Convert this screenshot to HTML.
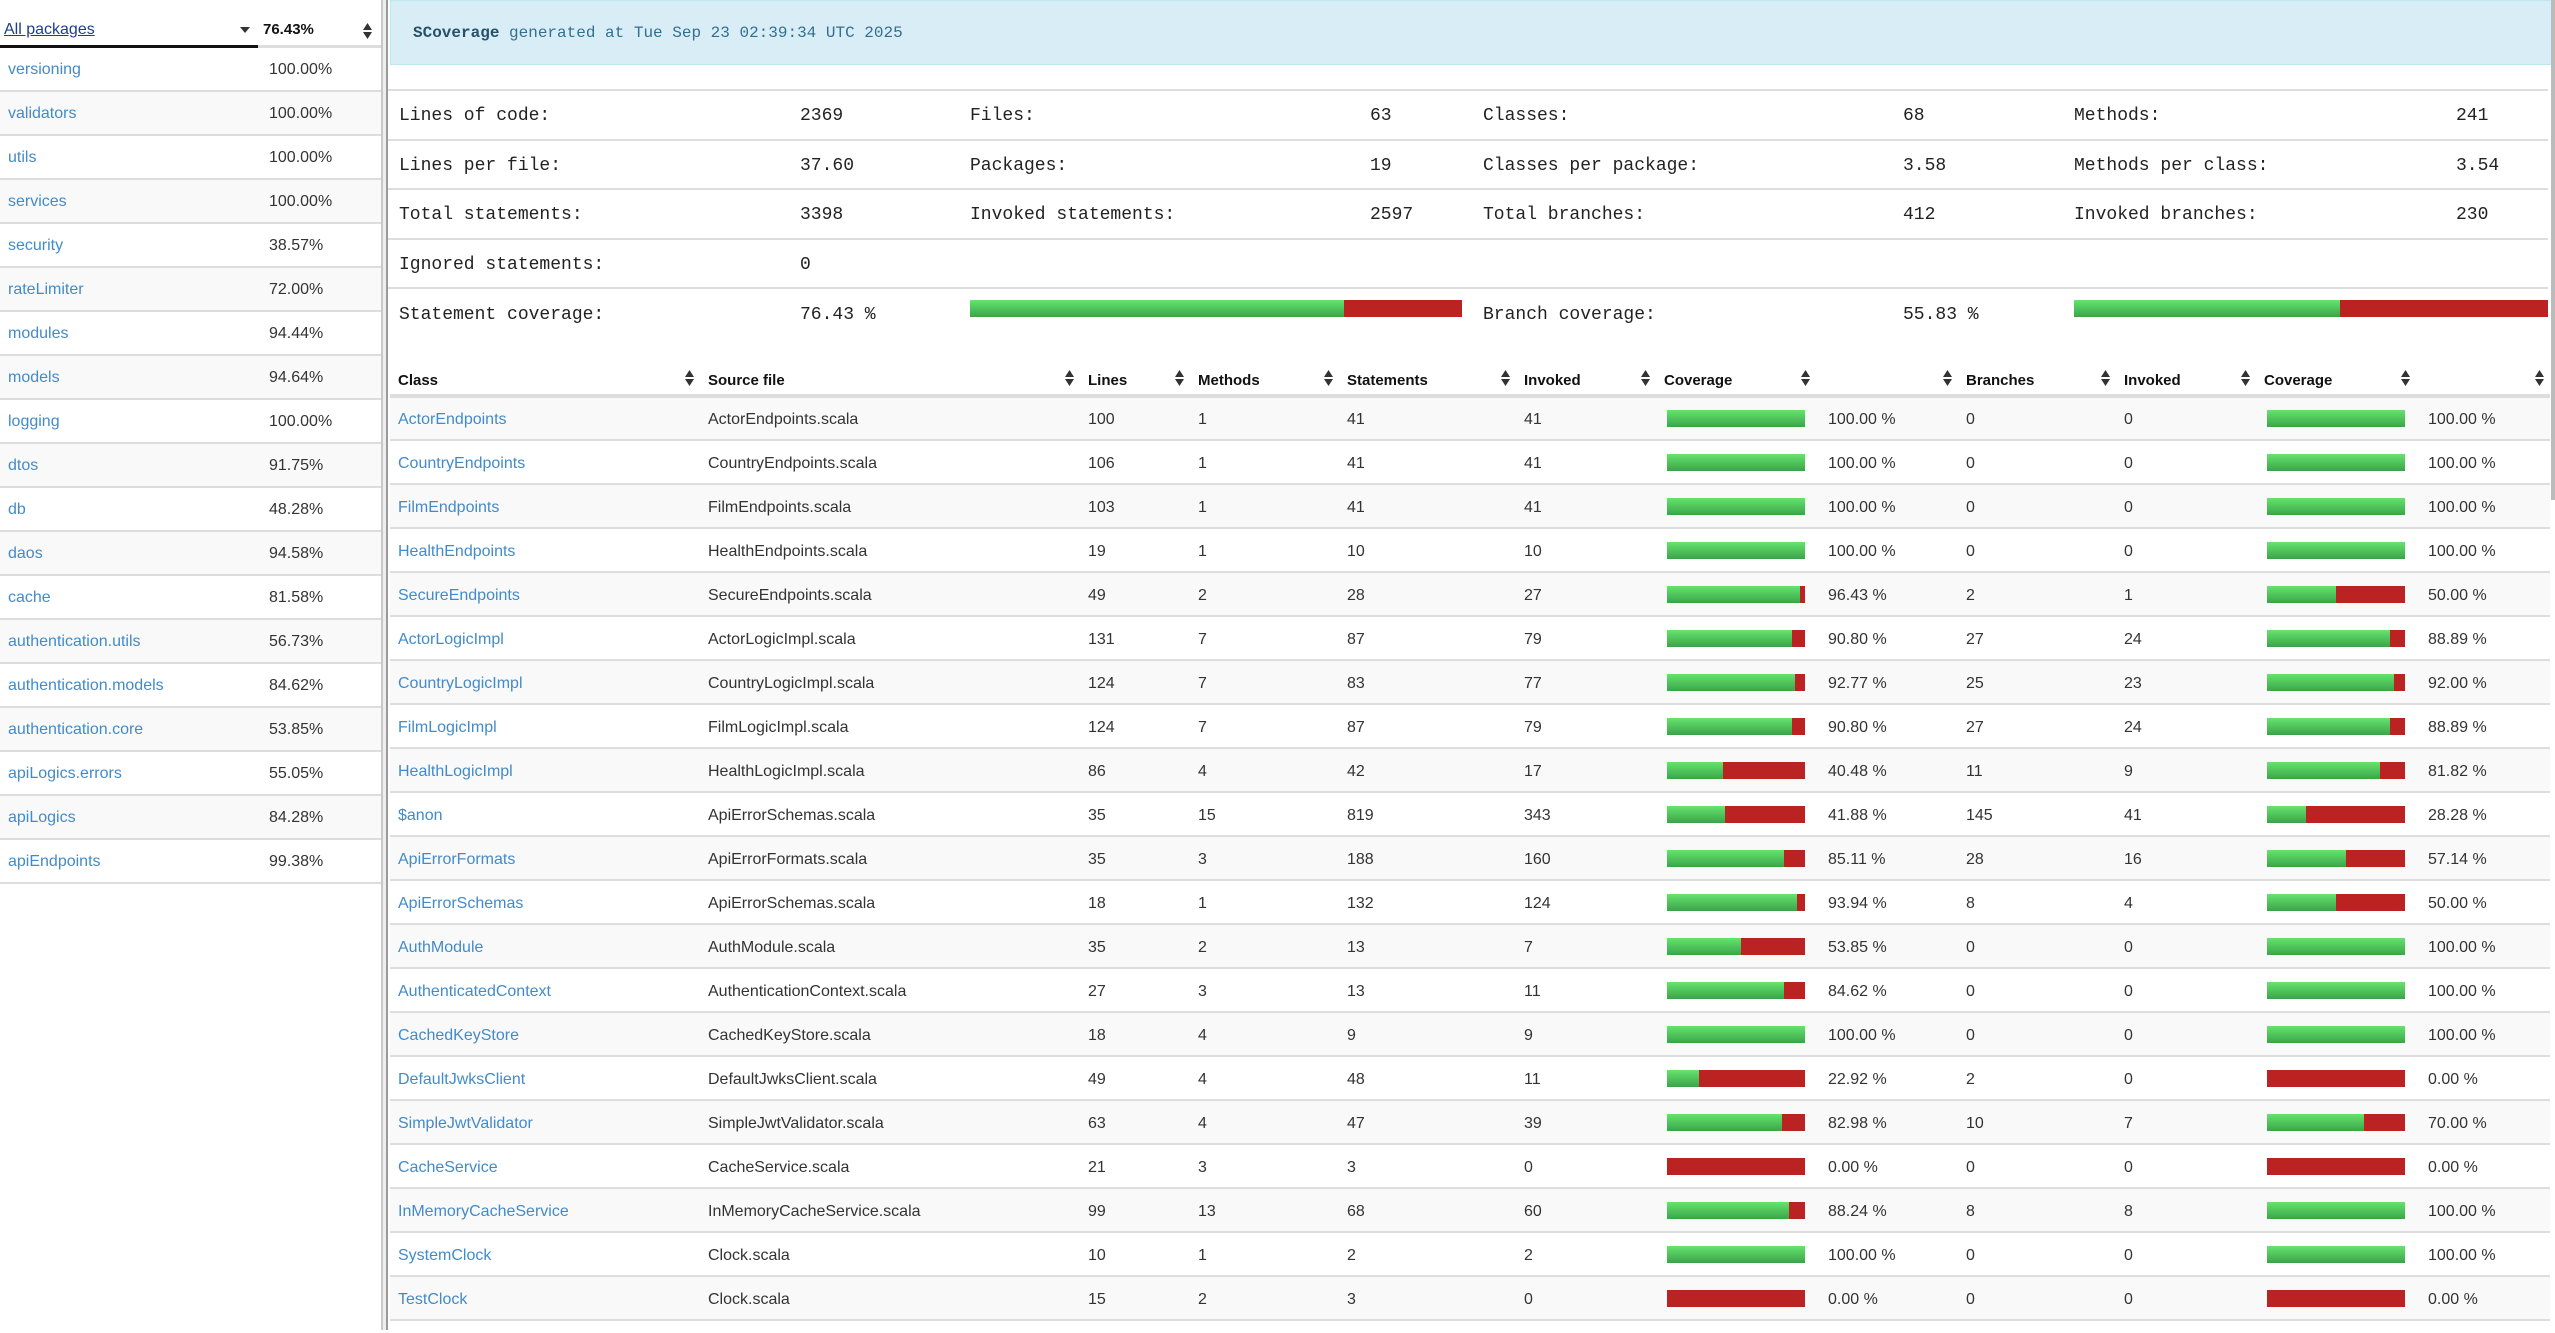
<!DOCTYPE html>
<html><head><meta charset="utf-8">
<style>
*{box-sizing:border-box;margin:0;padding:0}
body{width:2555px;height:1330px;overflow:hidden;background:#fff;font-family:"Liberation Sans",Arial,sans-serif;font-size:16px;color:#333;position:relative}
a{color:#428bca;text-decoration:none}
#side{position:absolute;left:0;top:3px;width:381px;height:1330px;background:#fff}
#div{position:absolute;left:381px;top:0;width:7px;height:1330px;border-left:2px solid #c8c8c8;border-right:2px solid #9a9a9a;background:#eee}
.sh{position:relative;height:45px;border-bottom:3px solid #ddd}
.sh .bl{position:absolute;left:0;bottom:-3px;width:258px;height:3px;background:#111}
.sh .ap{position:absolute;left:4px;top:18px;font-size:16px;color:#1a3f8f;text-decoration:underline}
.sh .pc{position:absolute;left:263px;top:18px;font-weight:bold;font-size:15px;color:#111}
.srow{height:44px;border-bottom:2px solid #ddd;position:relative}
.srow:nth-child(even){background:#f9f9f9}
.srow a{position:absolute;left:8px;top:13px;font-size:16px}
.srow span{position:absolute;left:269px;top:13px;font-size:16px}
#main{position:absolute;left:388px;top:0;width:2167px;height:1330px}
.hdr{position:absolute;left:2px;top:0;width:2163px;height:65px;background:#d9edf7;border:1px solid #bce8f1;font-family:"Liberation Mono",monospace;font-size:16px;color:#31708f;padding:23px 0 0 22px}
.hdr b{color:#245269}
.st{position:absolute;left:0;top:89px;width:2160px;font-family:"Liberation Mono",monospace;font-size:18px;color:#222}
.st .r{height:49.5px;border-top:2px solid #ddd;position:relative}
.st .r span{position:absolute;top:15px}
.bar{display:flex;height:17px}
.g{background:linear-gradient(#66e36f,#3aa548);height:100%}
.rd{background:#bb2222;height:100%;flex:1}
table{position:absolute;left:2px;top:362px;border-collapse:collapse;table-layout:fixed;width:2160px}
th{height:34px;text-align:left;font-size:15px;color:#111;border-bottom:4px solid #ddd;position:relative;padding-left:8px;vertical-align:bottom;padding-bottom:5px}
th svg{position:absolute;right:6px;bottom:8px}
td{height:44px;border-bottom:2px solid #ddd;padding-left:8px;font-size:16px;vertical-align:middle;white-space:nowrap;padding-top:3px}
td.p{padding-left:12px}
tbody tr:nth-child(odd){background:#f9f9f9}
td.b{padding-left:11px;padding-top:0}
td.b .bar{width:138px}
#scroll{position:absolute;right:0;top:0;width:4px;height:500px;background:#bbb}
</style></head><body>
<div id="side">
<div class="sh"><div class="bl"></div><a class="ap">All packages</a>
<svg style="position:absolute;left:240px;top:24px" width="10" height="6"><path d="M0 0H10L5 6Z" fill="#333"/></svg>
<span class="pc">76.43%</span>
<svg style="position:absolute;left:363px;top:20px" width="9" height="16"><path d="M0 7H9L4.5 0Z M0 9H9L4.5 16Z" fill="#333"/></svg>
</div>
<div>
<div class="srow"><a>versioning</a><span>100.00%</span></div>
<div class="srow"><a>validators</a><span>100.00%</span></div>
<div class="srow"><a>utils</a><span>100.00%</span></div>
<div class="srow"><a>services</a><span>100.00%</span></div>
<div class="srow"><a>security</a><span>38.57%</span></div>
<div class="srow"><a>rateLimiter</a><span>72.00%</span></div>
<div class="srow"><a>modules</a><span>94.44%</span></div>
<div class="srow"><a>models</a><span>94.64%</span></div>
<div class="srow"><a>logging</a><span>100.00%</span></div>
<div class="srow"><a>dtos</a><span>91.75%</span></div>
<div class="srow"><a>db</a><span>48.28%</span></div>
<div class="srow"><a>daos</a><span>94.58%</span></div>
<div class="srow"><a>cache</a><span>81.58%</span></div>
<div class="srow"><a>authentication.utils</a><span>56.73%</span></div>
<div class="srow"><a>authentication.models</a><span>84.62%</span></div>
<div class="srow"><a>authentication.core</a><span>53.85%</span></div>
<div class="srow"><a>apiLogics.errors</a><span>55.05%</span></div>
<div class="srow"><a>apiLogics</a><span>84.28%</span></div>
<div class="srow"><a>apiEndpoints</a><span>99.38%</span></div>
</div>
</div>
<div id="div"></div>
<div id="main">
<div class="hdr"><b>SCoverage</b> generated at Tue Sep 23 02:39:34 UTC 2025</div>
<div class="st">
<div class="r"><span style="left:11px">Lines of code:</span><span style="left:412px">2369</span><span style="left:582px">Files:</span><span style="left:982px">63</span><span style="left:1095px">Classes:</span><span style="left:1515px">68</span><span style="left:1686px">Methods:</span><span style="left:2068px">241</span></div>
<div class="r"><span style="left:11px">Lines per file:</span><span style="left:412px">37.60</span><span style="left:582px">Packages:</span><span style="left:982px">19</span><span style="left:1095px">Classes per package:</span><span style="left:1515px">3.58</span><span style="left:1686px">Methods per class:</span><span style="left:2068px">3.54</span></div>
<div class="r"><span style="left:11px">Total statements:</span><span style="left:412px">3398</span><span style="left:582px">Invoked statements:</span><span style="left:982px">2597</span><span style="left:1095px">Total branches:</span><span style="left:1515px">412</span><span style="left:1686px">Invoked branches:</span><span style="left:2068px">230</span></div>
<div class="r"><span style="left:11px">Ignored statements:</span><span style="left:412px">0</span></div>
<div class="r" style="height:50px"><span style="left:11px;top:16px">Statement coverage:</span><span style="left:412px;top:16px">76.43 %</span><span style="left:582px;top:11px"><div class="bar" style="width:492px"><div class="g" style="width:374px"></div><div class="rd"></div></div></span><span style="left:1095px;top:16px">Branch coverage:</span><span style="left:1515px;top:16px">55.83 %</span><span style="left:1686px;top:11px"><div class="bar" style="width:474px"><div class="g" style="width:266px"></div><div class="rd"></div></div></span></div>
</div>
<table>
<colgroup><col style="width:310px"><col style="width:380px"><col style="width:110px"><col style="width:149px"><col style="width:177px"><col style="width:140px"><col style="width:160px"><col style="width:142px"><col style="width:158px"><col style="width:140px"><col style="width:160px"><col style="width:134px"></colgroup>
<thead><tr>
<th>Class<svg width="9" height="16"><path d="M0 7H9L4.5 0Z M0 9H9L4.5 16Z" fill="#333"/></svg></th>
<th>Source file<svg width="9" height="16"><path d="M0 7H9L4.5 0Z M0 9H9L4.5 16Z" fill="#333"/></svg></th>
<th>Lines<svg width="9" height="16"><path d="M0 7H9L4.5 0Z M0 9H9L4.5 16Z" fill="#333"/></svg></th>
<th>Methods<svg width="9" height="16"><path d="M0 7H9L4.5 0Z M0 9H9L4.5 16Z" fill="#333"/></svg></th>
<th>Statements<svg width="9" height="16"><path d="M0 7H9L4.5 0Z M0 9H9L4.5 16Z" fill="#333"/></svg></th>
<th>Invoked<svg width="9" height="16"><path d="M0 7H9L4.5 0Z M0 9H9L4.5 16Z" fill="#333"/></svg></th>
<th>Coverage<svg width="9" height="16"><path d="M0 7H9L4.5 0Z M0 9H9L4.5 16Z" fill="#333"/></svg></th>
<th><svg width="9" height="16"><path d="M0 7H9L4.5 0Z M0 9H9L4.5 16Z" fill="#333"/></svg></th>
<th>Branches<svg width="9" height="16"><path d="M0 7H9L4.5 0Z M0 9H9L4.5 16Z" fill="#333"/></svg></th>
<th>Invoked<svg width="9" height="16"><path d="M0 7H9L4.5 0Z M0 9H9L4.5 16Z" fill="#333"/></svg></th>
<th>Coverage<svg width="9" height="16"><path d="M0 7H9L4.5 0Z M0 9H9L4.5 16Z" fill="#333"/></svg></th>
<th><svg width="9" height="16"><path d="M0 7H9L4.5 0Z M0 9H9L4.5 16Z" fill="#333"/></svg></th>
</tr></thead>
<tbody>
<tr><td><a>ActorEndpoints</a></td><td>ActorEndpoints.scala</td><td>100</td><td>1</td><td>41</td><td>41</td><td class="b"><div class="bar"><div class="g" style="width:138px"></div><div class="rd"></div></div></td><td class="p">100.00 %</td><td>0</td><td>0</td><td class="b"><div class="bar"><div class="g" style="width:138px"></div><div class="rd"></div></div></td><td class="p">100.00 %</td></tr>
<tr><td><a>CountryEndpoints</a></td><td>CountryEndpoints.scala</td><td>106</td><td>1</td><td>41</td><td>41</td><td class="b"><div class="bar"><div class="g" style="width:138px"></div><div class="rd"></div></div></td><td class="p">100.00 %</td><td>0</td><td>0</td><td class="b"><div class="bar"><div class="g" style="width:138px"></div><div class="rd"></div></div></td><td class="p">100.00 %</td></tr>
<tr><td><a>FilmEndpoints</a></td><td>FilmEndpoints.scala</td><td>103</td><td>1</td><td>41</td><td>41</td><td class="b"><div class="bar"><div class="g" style="width:138px"></div><div class="rd"></div></div></td><td class="p">100.00 %</td><td>0</td><td>0</td><td class="b"><div class="bar"><div class="g" style="width:138px"></div><div class="rd"></div></div></td><td class="p">100.00 %</td></tr>
<tr><td><a>HealthEndpoints</a></td><td>HealthEndpoints.scala</td><td>19</td><td>1</td><td>10</td><td>10</td><td class="b"><div class="bar"><div class="g" style="width:138px"></div><div class="rd"></div></div></td><td class="p">100.00 %</td><td>0</td><td>0</td><td class="b"><div class="bar"><div class="g" style="width:138px"></div><div class="rd"></div></div></td><td class="p">100.00 %</td></tr>
<tr><td><a>SecureEndpoints</a></td><td>SecureEndpoints.scala</td><td>49</td><td>2</td><td>28</td><td>27</td><td class="b"><div class="bar"><div class="g" style="width:133px"></div><div class="rd"></div></div></td><td class="p">96.43 %</td><td>2</td><td>1</td><td class="b"><div class="bar"><div class="g" style="width:69px"></div><div class="rd"></div></div></td><td class="p">50.00 %</td></tr>
<tr><td><a>ActorLogicImpl</a></td><td>ActorLogicImpl.scala</td><td>131</td><td>7</td><td>87</td><td>79</td><td class="b"><div class="bar"><div class="g" style="width:125px"></div><div class="rd"></div></div></td><td class="p">90.80 %</td><td>27</td><td>24</td><td class="b"><div class="bar"><div class="g" style="width:123px"></div><div class="rd"></div></div></td><td class="p">88.89 %</td></tr>
<tr><td><a>CountryLogicImpl</a></td><td>CountryLogicImpl.scala</td><td>124</td><td>7</td><td>83</td><td>77</td><td class="b"><div class="bar"><div class="g" style="width:128px"></div><div class="rd"></div></div></td><td class="p">92.77 %</td><td>25</td><td>23</td><td class="b"><div class="bar"><div class="g" style="width:127px"></div><div class="rd"></div></div></td><td class="p">92.00 %</td></tr>
<tr><td><a>FilmLogicImpl</a></td><td>FilmLogicImpl.scala</td><td>124</td><td>7</td><td>87</td><td>79</td><td class="b"><div class="bar"><div class="g" style="width:125px"></div><div class="rd"></div></div></td><td class="p">90.80 %</td><td>27</td><td>24</td><td class="b"><div class="bar"><div class="g" style="width:123px"></div><div class="rd"></div></div></td><td class="p">88.89 %</td></tr>
<tr><td><a>HealthLogicImpl</a></td><td>HealthLogicImpl.scala</td><td>86</td><td>4</td><td>42</td><td>17</td><td class="b"><div class="bar"><div class="g" style="width:56px"></div><div class="rd"></div></div></td><td class="p">40.48 %</td><td>11</td><td>9</td><td class="b"><div class="bar"><div class="g" style="width:113px"></div><div class="rd"></div></div></td><td class="p">81.82 %</td></tr>
<tr><td><a>$anon</a></td><td>ApiErrorSchemas.scala</td><td>35</td><td>15</td><td>819</td><td>343</td><td class="b"><div class="bar"><div class="g" style="width:58px"></div><div class="rd"></div></div></td><td class="p">41.88 %</td><td>145</td><td>41</td><td class="b"><div class="bar"><div class="g" style="width:39px"></div><div class="rd"></div></div></td><td class="p">28.28 %</td></tr>
<tr><td><a>ApiErrorFormats</a></td><td>ApiErrorFormats.scala</td><td>35</td><td>3</td><td>188</td><td>160</td><td class="b"><div class="bar"><div class="g" style="width:117px"></div><div class="rd"></div></div></td><td class="p">85.11 %</td><td>28</td><td>16</td><td class="b"><div class="bar"><div class="g" style="width:79px"></div><div class="rd"></div></div></td><td class="p">57.14 %</td></tr>
<tr><td><a>ApiErrorSchemas</a></td><td>ApiErrorSchemas.scala</td><td>18</td><td>1</td><td>132</td><td>124</td><td class="b"><div class="bar"><div class="g" style="width:130px"></div><div class="rd"></div></div></td><td class="p">93.94 %</td><td>8</td><td>4</td><td class="b"><div class="bar"><div class="g" style="width:69px"></div><div class="rd"></div></div></td><td class="p">50.00 %</td></tr>
<tr><td><a>AuthModule</a></td><td>AuthModule.scala</td><td>35</td><td>2</td><td>13</td><td>7</td><td class="b"><div class="bar"><div class="g" style="width:74px"></div><div class="rd"></div></div></td><td class="p">53.85 %</td><td>0</td><td>0</td><td class="b"><div class="bar"><div class="g" style="width:138px"></div><div class="rd"></div></div></td><td class="p">100.00 %</td></tr>
<tr><td><a>AuthenticatedContext</a></td><td>AuthenticationContext.scala</td><td>27</td><td>3</td><td>13</td><td>11</td><td class="b"><div class="bar"><div class="g" style="width:117px"></div><div class="rd"></div></div></td><td class="p">84.62 %</td><td>0</td><td>0</td><td class="b"><div class="bar"><div class="g" style="width:138px"></div><div class="rd"></div></div></td><td class="p">100.00 %</td></tr>
<tr><td><a>CachedKeyStore</a></td><td>CachedKeyStore.scala</td><td>18</td><td>4</td><td>9</td><td>9</td><td class="b"><div class="bar"><div class="g" style="width:138px"></div><div class="rd"></div></div></td><td class="p">100.00 %</td><td>0</td><td>0</td><td class="b"><div class="bar"><div class="g" style="width:138px"></div><div class="rd"></div></div></td><td class="p">100.00 %</td></tr>
<tr><td><a>DefaultJwksClient</a></td><td>DefaultJwksClient.scala</td><td>49</td><td>4</td><td>48</td><td>11</td><td class="b"><div class="bar"><div class="g" style="width:32px"></div><div class="rd"></div></div></td><td class="p">22.92 %</td><td>2</td><td>0</td><td class="b"><div class="bar"><div class="rd"></div></div></td><td class="p">0.00 %</td></tr>
<tr><td><a>SimpleJwtValidator</a></td><td>SimpleJwtValidator.scala</td><td>63</td><td>4</td><td>47</td><td>39</td><td class="b"><div class="bar"><div class="g" style="width:115px"></div><div class="rd"></div></div></td><td class="p">82.98 %</td><td>10</td><td>7</td><td class="b"><div class="bar"><div class="g" style="width:97px"></div><div class="rd"></div></div></td><td class="p">70.00 %</td></tr>
<tr><td><a>CacheService</a></td><td>CacheService.scala</td><td>21</td><td>3</td><td>3</td><td>0</td><td class="b"><div class="bar"><div class="rd"></div></div></td><td class="p">0.00 %</td><td>0</td><td>0</td><td class="b"><div class="bar"><div class="rd"></div></div></td><td class="p">0.00 %</td></tr>
<tr><td><a>InMemoryCacheService</a></td><td>InMemoryCacheService.scala</td><td>99</td><td>13</td><td>68</td><td>60</td><td class="b"><div class="bar"><div class="g" style="width:122px"></div><div class="rd"></div></div></td><td class="p">88.24 %</td><td>8</td><td>8</td><td class="b"><div class="bar"><div class="g" style="width:138px"></div><div class="rd"></div></div></td><td class="p">100.00 %</td></tr>
<tr><td><a>SystemClock</a></td><td>Clock.scala</td><td>10</td><td>1</td><td>2</td><td>2</td><td class="b"><div class="bar"><div class="g" style="width:138px"></div><div class="rd"></div></div></td><td class="p">100.00 %</td><td>0</td><td>0</td><td class="b"><div class="bar"><div class="g" style="width:138px"></div><div class="rd"></div></div></td><td class="p">100.00 %</td></tr>
<tr><td><a>TestClock</a></td><td>Clock.scala</td><td>15</td><td>2</td><td>3</td><td>0</td><td class="b"><div class="bar"><div class="rd"></div></div></td><td class="p">0.00 %</td><td>0</td><td>0</td><td class="b"><div class="bar"><div class="rd"></div></div></td><td class="p">0.00 %</td></tr>
</tbody></table>
<div id="scroll"></div>
</div>
</body></html>
